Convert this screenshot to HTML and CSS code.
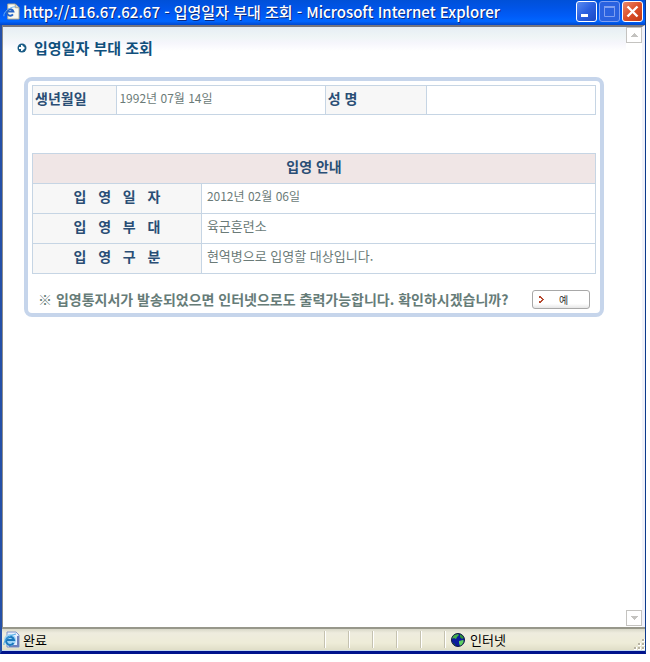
FILE: index.html
```html
<!DOCTYPE html>
<html lang="ko">
<head>
    <meta charset="UTF-8">
    <meta name="viewport" content="width=device-width, initial-scale=1.0">
    <title>입영일자 부대 조회</title>
    <link rel="stylesheet" href="styles.css">
</head>
<body>
    <div class="window">
        <!-- Title bar -->
        <header class="titlebar">
            <svg class="page-icon" viewBox="0 0 18 18">
                <path d="M5 1h8l4 4v12H5z" fill="#f8f8f0" stroke="#a9a58e"/>
                <path d="M13 1v4h4" fill="#d8d4c0" stroke="#a9a58e"/>
                <path d="M10.500 12A3.500 3.500 0 1 1 11 9H4" fill="none" stroke="#2463c4" stroke-width="2"/>
                <path d="M1 14C0 10 7 4 13 4" fill="none" stroke="#6fb3f0"/>
            </svg>
            <h1 class="window-title">http://116.67.62.67 - 입영일자 부대 조회 - Microsoft Internet Explorer</h1>
            <div class="window-buttons">
                <button type="button" class="win-btn" aria-label="최소화">
                    <svg viewBox="0 0 17 17"><path d="M3 11h7v3H3z" fill="#fff"/></svg>
                </button>
                <button type="button" class="win-btn win-max" aria-label="최대화" disabled>
                    <svg viewBox="0 0 17 17"><path d="M3.500 4v9.500h10V4" fill="none" stroke="#7f9ff0"/><path d="M3 3h11v2H3z" fill="#7f9ff0"/></svg>
                </button>
                <button type="button" class="win-btn win-close" aria-label="닫기">
                    <svg viewBox="0 0 17 17"><path d="M3.500 3.500l10 10M13.500 3.500l-10 10" stroke="#fff" stroke-width="2.400"/></svg>
                </button>
            </div>
        </header>

        <!-- Page -->
        <div class="viewport">
            <main class="page">
                <h2 class="page-title">
                    <svg class="bullet" viewBox="0 0 10 10">
                        <circle cx="5" cy="5" r="4.500" fill="#1b5c86"/>
                        <path d="M2 4h2V2h1l3 3-3 3H4V6H2z" fill="#fff"/>
                    </svg>
                    입영일자 부대 조회
                </h2>
                <section class="panel">
                    <table class="info person">
                        <colgroup>
                            <col class="c-birth"><col class="c-date"><col class="c-name"><col>
                        </colgroup>
                        <tr>
                            <th scope="row">생년월일</th>
                            <td>1992년 07월 14일</td>
                            <th scope="row">성 명</th>
                            <td></td>
                        </tr>
                    </table>

                    <table class="info guide">
                        <colgroup>
                            <col class="c-label"><col>
                        </colgroup>
                        <tr>
                            <th class="guide-title" colspan="2">입영 안내</th>
                        </tr>
                        <tr>
                            <th scope="row">입&nbsp;&nbsp; 영&nbsp;&nbsp; 일&nbsp;&nbsp; 자</th>
                            <td class="date">2012년 02월 06일</td>
                        </tr>
                        <tr>
                            <th scope="row">입&nbsp;&nbsp; 영&nbsp;&nbsp; 부&nbsp;&nbsp; 대</th>
                            <td>육군훈련소</td>
                        </tr>
                        <tr>
                            <th scope="row">입&nbsp;&nbsp; 영&nbsp;&nbsp; 구&nbsp;&nbsp; 분</th>
                            <td>현역병으로 입영할 대상입니다.</td>
                        </tr>
                    </table>

                    <div class="confirm">
                        <p>※ 입영통지서가 발송되었으면 인터넷으로도 출력가능합니다. 확인하시겠습니까?</p>
                        <button type="button" class="yes-btn">
                            <svg viewBox="0 0 5 7"><path d="M0 0h2v2H0zM2 1h1v1h1v1h1v1H4v1H3v1H2V4h1V3H2zM0 5h2v2H0z" fill="#b5482e"/></svg>
                            <span>예</span>
                        </button>
                    </div>
                </section>
            </main>
            <div class="scrollbar">
                <button type="button" class="scroll-btn" aria-label="위로" disabled>
                    <svg viewBox="0 0 7 4"><path d="M3 0h1v1h1v1h1v1h1v1H0V3h1V2h1V1h1z" fill="#c4c3c0"/></svg>
                </button>
                <button type="button" class="scroll-btn" aria-label="아래로" disabled>
                    <svg viewBox="0 0 7 4"><path d="M0 0h7v1H6v1H5v1H4v1H3V3H2V2H1V1H0z" fill="#c4c3c0"/></svg>
                </button>
            </div>
        </div>

        <!-- Status bar -->
        <footer class="statusbar">
            <div class="status-text">
                <svg class="status-icon" viewBox="0 0 17 17">
                    <path d="M4 1h9l3 3v12H4z" fill="#e6efff" stroke="#7d93c9"/>
                    <path d="M14 5h2v11H6v-2h8z" fill="#6d80bd"/>
                    <circle cx="7" cy="9" r="6" fill="#9ed3f5"/>
                    <path d="M10.500 12A4 4 0 1 1 11 9H4" fill="none" stroke="#1b78bd" stroke-width="2"/>
                    <path d="M1 14C0 10 6 4 13 3" fill="none" stroke="#4aa9e3"/>
                </svg>
                완료
            </div>
            <div class="status-cell"></div>
            <div class="status-cell"></div>
            <div class="status-cell"></div>
            <div class="status-cell"></div>
            <div class="status-cell"></div>
            <div class="status-zone">
                <svg class="globe" viewBox="0 0 14 14">
                    <circle cx="7" cy="7" r="6.500" fill="#0b1c9c"/>
                    <path d="M1 5C2 2 4 1 7 1l1 1-2 2-1 2-2-1-2 1z" fill="#46b04a"/>
                    <path d="M9 1l3 2 1 2-2 1-2-2z" fill="#2f8f3a"/>
                    <path d="M8 8l4-1 1 1-2 4-2 1-1-3z" fill="#5fcf60"/>
                    <path d="M2 10l2 1v2L3 12z" fill="#1d6e35"/>
                    <circle cx="7" cy="7" r="6.500" fill="none" stroke="#101840"/>
                </svg>
                인터넷
            </div>
            <svg class="grip" viewBox="0 0 11 11">
                <path d="M8 0h3v3H8zM4 4h3v3H4zM8 4h3v3H8zM0 8h3v3H0zM4 8h3v3H4zM8 8h3v3H8z" fill="#fff"/>
                <path d="M8 0h2v2H8zM4 4h2v2H4zM8 4h2v2H8zM0 8h2v2H0zM4 8h2v2H4zM8 8h2v2H8z" fill="#b8b4a2"/>
            </svg>
        </footer>
    </div>
</body>
</html>
```

FILE: styles.css
```css
* {
    margin: 0;
    padding: 0;
    box-sizing: border-box;
}

body {
    height: 100vh;
    padding: 0 4px 8px 0;
    background-color: #fff;
    font-family: "Noto Sans CJK KR", sans-serif;
    font-size: 12px;
}

svg {
    display: block;
    flex: none;
}

button {
    font-family: inherit;
}

/* Window frame */
.window {
    display: flex;
    flex-direction: column;
    height: 100%;
    border-left: 2px solid #2450a8;
    border-right: 1px solid #0c3a8c;
    border-bottom: 3px solid #00138c;
    background-color: #fff;
}

.titlebar {
    display: flex;
    align-items: center;
    gap: 3px;
    height: 25px;
    margin-left: -2px;
    padding: 0 2px 2px 3px;
    background: linear-gradient(#0050d8, #0054e6 30%, #005cf8 65%, #0066ff 85%, #0047cc);
}

.page-icon {
    width: 17px;
    height: 17px;
}

.window-title {
    flex: 1;
    color: #fff;
    font-size: 15px;
    font-weight: 500;
    line-height: 20px;
    white-space: nowrap;
    text-shadow: 1px 1px #0a2a80;
}

.window-buttons {
    display: flex;
    gap: 2px;
}

.win-btn {
    width: 21px;
    height: 21px;
    padding: 1px;
    border: 1px solid #fff;
    border-radius: 3px;
    background: linear-gradient(135deg, #5a8cf0, #2a5fe0 50%, #1c48c4);
}

.win-max {
    border-color: #7f9ff0;
    background: #2a62e0;
}

.win-close {
    background: linear-gradient(135deg, #ea8a6c, #dc4f2a 50%, #c03a14);
}

/* Page area */
.viewport {
    display: flex;
    flex: 1;
    border-top: 2px solid #77777f;
    border-left: 1px solid #8c8c8c;
    border-right: 3px solid #f0f1fa;
}

.page {
    flex: 1;
    padding: 0 22px 0 14px;
    background: linear-gradient(#e6eef4, #eff5f6 10px, #f6f6fc 16px, #fff 24px);
}

.page-title {
    display: flex;
    align-items: center;
    gap: 7px;
    padding-top: 9px;
    color: #11507c;
    font-size: 15px;
    line-height: 24px;
}

.bullet {
    width: 10px;
    height: 10px;
}

.panel {
    margin: 17px 0 0 7px;
    padding: 4px;
    border: 4px solid #c6d5eb;
    border-radius: 8px;
}

/* Tables */
.info {
    width: 100%;
    border-collapse: collapse;
    table-layout: fixed;
}

.info th,
.info td {
    height: 30px;
    border: 1px solid #c6d5e4;
    text-align: left;
    line-height: 20px;
}

.info th {
    padding: 0 2px 5px;
    background-color: #f7f7f7;
    color: #2a4e75;
    font-size: 14px;
}

.info td {
    padding: 0 5px 5px;
    color: #6b7b78;
    font-size: 13px;
}

.info .date {
    font-size: 12px;
}

.person th,
.person td {
    height: 29px;
}

.info.person td {
    padding: 0 2px 5px;
    font-size: 12px;
}

.c-birth {
    width: 15%;
}

.c-date {
    width: 37%;
}

.c-name {
    width: 18%;
}

.c-label {
    width: 30%;
}

.guide {
    margin-top: 38px;
}

.info.guide th {
    text-align: center;
}

.info .guide-title {
    background-color: #f0e6e6;
}

/* Question and answer button */
.confirm {
    display: flex;
    align-items: center;
    justify-content: space-between;
    padding: 15px 6px 0;
    color: #667c78;
    font-size: 14px;
    font-weight: bold;
    line-height: 20px;
    white-space: nowrap;
}

.yes-btn {
    display: flex;
    align-items: center;
    width: 58px;
    height: 19px;
    padding: 0 6px;
    border: 1px solid #a8a8a8;
    border-radius: 3px;
    background: linear-gradient(#fff 75%, #e6e6e6);
    color: #333;
    font-size: 10px;
}

.yes-btn svg {
    width: 5px;
    height: 7px;
}

.yes-btn span {
    flex: 1;
    text-align: center;
}

/* Scrollbar */
.scrollbar {
    display: flex;
    flex-direction: column;
    justify-content: space-between;
    padding-bottom: 1px;
}

.scroll-btn {
    display: flex;
    align-items: center;
    justify-content: center;
    width: 16px;
    height: 16px;
    border: 1px solid #c4c3c0;
    background-color: #fff;
}

.scroll-btn svg {
    width: 7px;
    height: 4px;
}

/* Status bar */
.statusbar {
    display: flex;
    align-items: center;
    height: 24px;
    border-top: 2px solid #97978a;
    border-bottom: 1px solid #c4d8ee;
    background: linear-gradient(#d8d8c8, #eeecde 4px, #eeecd8 14px, #e0dec8);
    color: #000;
    font-size: 13px;
    line-height: 18px;
}

.status-text {
    display: flex;
    flex: 1;
    align-items: center;
    gap: 3px;
    padding-left: 1px;
}

.status-icon {
    width: 17px;
    height: 17px;
}

.status-cell {
    width: 24px;
    height: 17px;
    border-left: 1px solid #c5c2b0;
    box-shadow: inset 1px 0 #fff;
}

.status-zone {
    display: flex;
    align-items: center;
    gap: 5px;
    width: 190px;
    height: 17px;
    padding-left: 6px;
    border-left: 1px solid #c5c2b0;
    box-shadow: inset 1px 0 #fff;
}

.globe {
    width: 14px;
    height: 14px;
}

.grip {
    align-self: flex-end;
    width: 11px;
    height: 11px;
}
```
